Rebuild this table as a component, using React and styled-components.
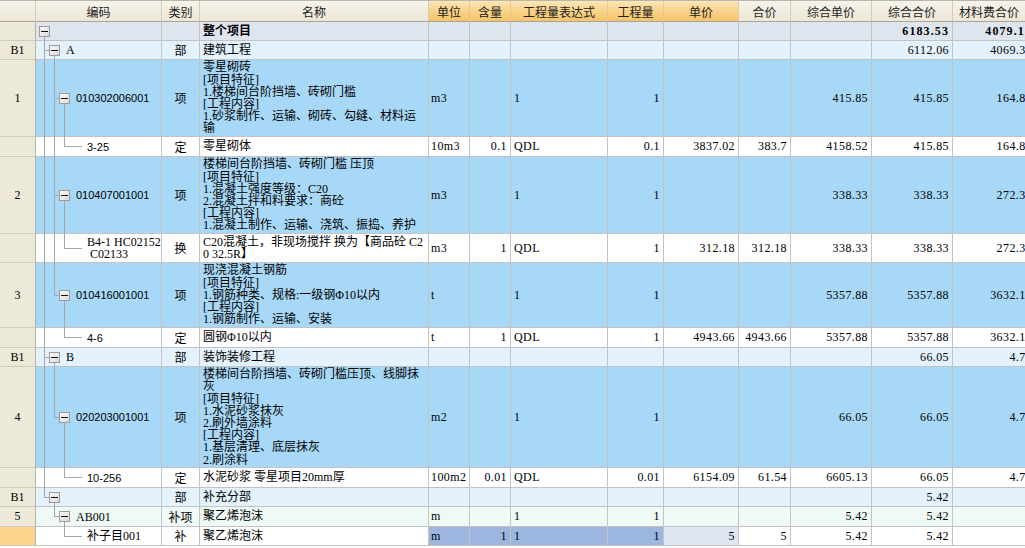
import React, { useId } from 'react';
import styled, { createGlobalStyle, css } from 'styled-components';

// column widths: 行号 | 编码 | 类别 | 名称 | 单位 | 含量 | 工程量表达式 | 工程量 | 单价 | 合价 | 综合单价 | 综合合价 | 材料费合价
const COLS = '36px 126px 38px 229px 41px 41px 97px 56px 75px 52px 81px 81px 83px';

const GlobalStyle = createGlobalStyle`
  html, body {
    margin: 0;
    padding: 0;
    background: #fff;
    overflow: hidden;
  }
  body {
    font-family: "Liberation Serif", "Noto Sans CJK SC", serif;
    font-size: 12px;
    color: #000;
  }
`;

const Sheet = styled.div`
  width: 1025px;
  height: 548px;
  overflow: hidden;
  background: #fff;
`;

const Grid = styled.div`
  width: 1036px;
`;

const Row = styled.div`
  display: grid;
  grid-template-columns: ${COLS};
  height: ${(p) => p.$h}px;
  background: ${(p) => p.$bg || '#fff'};
`;

// header
const HeadRow = styled(Row)`
  background: linear-gradient(#f6f3ea, #ece6d6);
  border-top: 1px solid #b9b6ab;
  box-sizing: border-box;
`;

const HeadCell = styled.div`
  box-sizing: border-box;
  display: flex;
  align-items: center;
  justify-content: center;
  padding-right: ${(p) => p.$shift || 0}px;
  border-right: 1px solid #d2ccbb;
  border-bottom: 1px solid #aaa697;
  font-family: "Noto Sans CJK SC", sans-serif;
  font-size: 12px;
  color: #222;
  white-space: nowrap;
  overflow: hidden;
  ${(p) =>
    p.$hot &&
    css`
      background: linear-gradient(#fce6b8 0%, #f9d48c 45%, #f4c46c 100%);
      border-right-color: #e9c68a;
    `}
`;

// row number column
const RowNo = styled.div`
  box-sizing: border-box;
  display: flex;
  align-items: center;
  justify-content: center;
  background: ${(p) => (p.$mark ? '#fdd38e' : '#ece9d8')};
  border-right: 1px solid #b5b2a6;
  border-bottom: 1px solid #cfcbbd;
  font-size: 12px;
`;

const Cell = styled.div`
  position: relative;
  box-sizing: border-box;
  display: flex;
  align-items: center;
  justify-content: ${(p) =>
    p.$align === 'right' ? 'flex-end' : p.$align === 'center' ? 'center' : 'flex-start'};
  padding: 0 ${(p) => (p.$align === 'right' ? 3 : 2)}px 0 ${(p) => p.$indent ?? 2}px;
  border-right: 1px solid #c3c3c3;
  border-bottom: 1px solid #c3c3c3;
  background: ${(p) => p.$bg || 'transparent'};
  white-space: nowrap;
  overflow: ${(p) => (p.$tree ? 'visible' : 'hidden')};
  font-weight: ${(p) => (p.$bold ? 700 : 400)};
  letter-spacing: ${(p) => (p.$num ? (p.$bold ? '1.1px' : '0.4px') : '0')};
`;

const Lines = styled.div`
  display: flex;
  flex-direction: column;
  line-height: 12.2px;
  position: relative;
`;

const CodeText = styled.span`
  position: relative;
  font-family: ${(p) =>
    p.$sans ? '"Liberation Sans", sans-serif' : '"Liberation Serif", "Noto Sans CJK SC", serif'};
  font-size: ${(p) => (p.$sans ? 11 : 12)}px;
  line-height: 12px;
  white-space: pre;
`;

const TreeSvg = styled.svg`
  position: absolute;
  left: 0;
  top: 0;
  overflow: visible;
  pointer-events: none;
`;

const LINE = '#a6a6a6';
const gx = (k) => 8 + 10 * k;

function TreeLines({ h, level, box, open, link, pass = [] }) {
  const gid = useId().replace(/:/g, '');
  const mid = Math.floor((h - 1) / 2);
  const bx = 3 + 10 * level;
  const parts = [];
  pass.forEach((k) => parts.push(<rect key={'p' + k} x={gx(k)} y={0} width={1} height={h} fill={LINE} />));
  if (level > 0) {
    const p = level - 1;
    const endX = box ? bx : 46;
    parts.push(<rect key="v" x={gx(p)} y={0} width={1} height={link === 'tee' ? h : mid + 1} fill={LINE} />);
    parts.push(<rect key="hz" x={gx(p)} y={mid} width={endX - gx(p)} height={1} fill={LINE} />);
  }
  if (box && open) {
    parts.push(<rect key="down" x={gx(level)} y={mid + 6} width={1} height={h - mid - 6} fill={LINE} />);
  }
  return (
    <TreeSvg width="60" height={h}>
      <defs>
        <linearGradient id={gid} x1="0" y1="0" x2="1" y2="1">
          <stop offset="0" stopColor="#ffffff" />
          <stop offset="1" stopColor="#d6d6d0" />
        </linearGradient>
      </defs>
      {parts}
      {box && (
        <g>
          <rect x={bx + 0.5} y={mid - 5 + 0.5} width={10} height={10} fill={`url(#${gid})`} stroke="#9c9c9c" />
          <rect x={bx + 2} y={mid} width={7} height={1} fill="#111" />
        </g>
      )}
    </TreeSvg>
  );
}

const BG = {
  total: '#dfe5ee',
  part: '#e3f2fc',
  item: '#a8d8f7',
  quota: '#ffffff',
  extra: '#effaf6',
};

const ALIGN = ['left', 'right', 'left', 'right', 'right', 'right', 'right', 'right', 'right'];
const HILITE = { sel: '#9cb6df', soft: '#dde6f2' };

const rows = [
  { h: 19, kind: 'total', no: '', tree: { level: 0, box: true, open: true }, code: '', type: '', name: ['整个项目'], bold: true,
    vals: ['', '', '', '', '', '', '', '6183.53', '4079.13'] },
  { h: 19, kind: 'part', no: 'B1', tree: { level: 1, box: true, open: true, link: 'tee' }, code: 'A', type: '部', name: ['建筑工程'],
    vals: ['', '', '', '', '', '', '', '6112.06', '4069.36'] },
  { h: 77, kind: 'item', no: '1', tree: { level: 2, box: true, open: true, link: 'tee', pass: [0] }, code: '010302006001', sans: true, type: '项',
    name: ['零星砌砖', '[项目特征]', '1.楼梯间台阶挡墙、砖砌门槛', '[工程内容]', '1.砂浆制作、运输、砌砖、勾缝、材料运', '输'],
    vals: ['m3', '', '1', '1', '', '', '415.85', '415.85', '164.86'] },
  { h: 20, kind: 'quota', no: '', tree: { level: 3, link: 'elbow', pass: [0, 1] }, code: '3-25', sans: true, type: '定', name: ['零星砌体'],
    vals: ['10m3', '0.1', 'QDL', '0.1', '3837.02', '383.7', '4158.52', '415.85', '164.86'] },
  { h: 77, kind: 'item', no: '2', tree: { level: 2, box: true, open: true, link: 'tee', pass: [0] }, code: '010407001001', sans: true, type: '项',
    name: ['楼梯间台阶挡墙、砖砌门槛 压顶', '[项目特征]', '1.混凝土强度等级：C20', '2.混凝土拌和料要求：商砼', '[工程内容]', '1.混凝土制作、运输、浇筑、振捣、养护'],
    vals: ['m3', '', '1', '1', '', '', '338.33', '338.33', '272.34'] },
  { h: 29, kind: 'quota', no: '', tree: { level: 3, link: 'elbow', pass: [0, 1] }, code: ['B4-1 HC02152', ' C02133'], type: '换',
    name: ['C20混凝土，非现场搅拌 换为【商品砼 C2', '0 32.5R】'],
    vals: ['m3', '1', 'QDL', '1', '312.18', '312.18', '338.33', '338.33', '272.34'] },
  { h: 65, kind: 'item', no: '3', tree: { level: 2, box: true, open: true, link: 'elbow', pass: [0] }, code: '010416001001', sans: true, type: '项',
    name: ['现浇混凝土钢筋', '[项目特征]', '1.钢筋种类、规格:一级钢Φ10以内', '[工程内容]', '1.钢筋制作、运输、安装'],
    vals: ['t', '', '1', '1', '', '', '5357.88', '5357.88', '3632.16'] },
  { h: 20, kind: 'quota', no: '', tree: { level: 3, link: 'elbow', pass: [0] }, code: '4-6', sans: true, type: '定', name: ['圆钢Φ10以内'],
    vals: ['t', '1', 'QDL', '1', '4943.66', '4943.66', '5357.88', '5357.88', '3632.16'] },
  { h: 19, kind: 'part', no: 'B1', tree: { level: 1, box: true, open: true, link: 'tee' }, code: 'B', type: '部', name: ['装饰装修工程'],
    vals: ['', '', '', '', '', '', '', '66.05', '4.77'] },
  { h: 101, kind: 'item', no: '4', tree: { level: 2, box: true, open: true, link: 'elbow', pass: [0] }, code: '020203001001', sans: true, type: '项',
    name: ['楼梯间台阶挡墙、砖砌门槛压顶、线脚抹', '灰', '[项目特征]', '1.水泥砂浆抹灰', '2.刷外墙涂料', '[工程内容]', '1.基层清理、底层抹灰', '2.刷涂料'],
    vals: ['m2', '', '1', '1', '', '', '66.05', '66.05', '4.77'] },
  { h: 20, kind: 'quota', no: '', tree: { level: 3, link: 'elbow', pass: [0] }, code: '10-256', sans: true, type: '定', name: ['水泥砂浆 零星项目20mm厚'],
    vals: ['100m2', '0.01', 'QDL', '0.01', '6154.09', '61.54', '6605.13', '66.05', '4.77'] },
  { h: 19, kind: 'part', no: 'B1', tree: { level: 1, box: true, open: true, link: 'elbow' }, code: '', type: '部', name: ['补充分部'],
    vals: ['', '', '', '', '', '', '', '5.42', ''] },
  { h: 20, kind: 'extra', no: '5', tree: { level: 2, box: true, open: true, link: 'elbow' }, code: 'AB001', type: '补项', name: ['聚乙烯泡沫'],
    vals: ['m', '', '1', '1', '', '', '5.42', '5.42', ''] },
  { h: 19, kind: 'quota', no: '', mark: true, tree: { level: 3, link: 'elbow' }, code: '补子目001', type: '补', name: ['聚乙烯泡沫'],
    vals: ['m', '1', '1', '1', '5', '5', '5.42', '5.42', ''],
    hi: { 0: 'sel', 1: 'sel', 2: 'sel', 3: 'sel', 4: 'soft' } },
];

const headers = [
  { t: '' },
  { t: '编码' },
  { t: '类别' },
  { t: '名称' },
  { t: '单位', hot: true },
  { t: '含量', hot: true },
  { t: '工程量表达式', hot: true },
  { t: '工程量', hot: true },
  { t: '单价', hot: true },
  { t: '合价' },
  { t: '综合单价' },
  { t: '综合合价' },
  { t: '材料费合价', shift: 10 },
];

function codeIndent(level, box) {
  if (level === 0) return 20;
  return box ? 3 + 10 * level + 17 : 51;
}

function BudgetRow({ r }) {
  const codeLines = Array.isArray(r.code) ? r.code : [r.code];
  return (
    <Row $h={r.h} $bg={BG[r.kind]}>
      <RowNo $mark={r.mark}>{r.no}</RowNo>
      <Cell $tree $indent={codeIndent(r.tree.level, r.tree.box)}>
        <TreeLines h={r.h} {...r.tree} />
        <Lines>
          {codeLines.map((c, i) => (
            <CodeText key={i} $sans={r.sans}>{c}</CodeText>
          ))}
        </Lines>
      </Cell>
      <Cell $align="center">{r.type}</Cell>
      <Cell $indent={3} $bold={r.bold}>
        <Lines>
          {r.name.map((l, i) => (
            <span key={i}>{l}</span>
          ))}
        </Lines>
      </Cell>
      {r.vals.map((v, i) => (
        <Cell
          key={i}
          $align={ALIGN[i]}
          $indent={i === 0 ? 2 : 3}
          $num
          $bold={r.bold}
          $bg={r.hi && r.hi[i] ? HILITE[r.hi[i]] : undefined}
        >
          {v}
        </Cell>
      ))}
    </Row>
  );
}

export default function App() {
  return (
    <Sheet>
      <GlobalStyle />
      <Grid>
        <HeadRow $h={22}>
          {headers.map((hd, i) => (
            <HeadCell key={i} $hot={hd.hot} $shift={hd.shift}>
              {hd.t}
            </HeadCell>
          ))}
        </HeadRow>
        {rows.map((r, i) => (
          <BudgetRow key={i} r={r} />
        ))}
      </Grid>
    </Sheet>
  );
}
